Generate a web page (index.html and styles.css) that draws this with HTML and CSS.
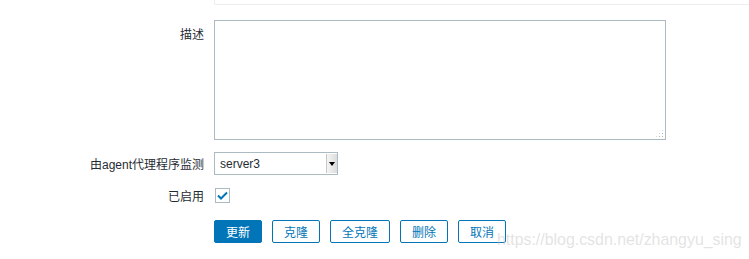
FILE: index.html
```html
<!DOCTYPE html>
<html lang="zh-CN">
<head>
    <meta charset="UTF-8">
    <title>主机</title>
    <link rel="stylesheet" href="styles.css">
</head>
<body>
    <div class="page">
        <div class="prev-field"></div>

        <form class="host-form">
            <div class="row">
                <label class="label label-top">描述</label>
                <span class="textarea-wrap">
                    <textarea class="textarea"></textarea>
                    <span class="grip"></span>
                </span>
            </div>

            <div class="row">
                <label class="label">由agent代理程序监测</label>
                <span class="select-wrap">
                    <select class="select">
                        <option>server3</option>
                    </select>
                    <span class="select-arrow"></span>
                </span>
            </div>

            <div class="row row-check">
                <label class="label">已启用</label>
                <span class="checkbox">
                    <svg width="11" height="9" viewBox="0 0 11 9">
                        <path d="M1 4.5 L4 7.5 L10 1.5" fill="none" stroke="#0275b8" stroke-width="2"/>
                    </svg>
                </span>
            </div>

            <div class="row row-buttons">
                <span class="label"></span>
                <div class="buttons">
                    <button type="button" class="btn btn-main">更新</button>
                    <button type="button" class="btn">克隆</button>
                    <button type="button" class="btn">全克隆</button>
                    <button type="button" class="btn">删除</button>
                    <button type="button" class="btn">取消</button>
                </div>
            </div>
        </form>

        <div class="watermark">https://blog.csdn.net/zhangyu_sing</div>
    </div>
</body>
</html>
```

FILE: styles.css
```css
body {
    margin: 0;
    background: #fff;
    font-family: "Liberation Sans", Arial, "Noto Sans CJK SC", sans-serif;
    font-size: 12px;
    color: #1f2c33;
}

.page {
    position: relative;
    height: 259px;
    overflow: hidden;
}

.prev-field {
    margin-left: 214px;
    height: 4px;
    border-left: 1px solid #ebeef0;
    border-bottom: 1px solid #ebeef0;
}

.host-form {
    padding-top: 15px;
}

.row {
    display: flex;
    align-items: center;
    margin-bottom: 12px;
}

.row:first-child {
    align-items: flex-start;
}

.label {
    width: 204px;
    flex: none;
    margin-right: 10px;
    text-align: right;
}

.label-top {
    padding-top: 5px;
}

.textarea-wrap {
    position: relative;
    display: inline-block;
    line-height: 0;
}

.textarea {
    box-sizing: border-box;
    width: 452px;
    height: 120px;
    margin: 0;
    border: 1px solid #acbbc2;
    background: #fff;
    resize: none;
}

/* dotted resize grip in the corner */
.grip {
    position: absolute;
    right: 2px;
    bottom: 2px;
    width: 9px;
    height: 9px;
    background:
        radial-gradient(circle, #b4b4b4 0.8px, transparent 1px) 0 0 / 3px 3px;
    clip-path: polygon(100% 0, 100% 100%, 0 100%);
}

.select-wrap {
    position: relative;
    display: inline-block;
}

.select {
    box-sizing: border-box;
    width: 124px;
    height: 23px;
    margin: 0;
    padding: 0 0 0 5px;
    border: 1px solid #acbbc2;
    border-radius: 0;
    background: #fff;
    font-family: inherit;
    font-size: 12px;
    color: #1f2c33;
    -webkit-appearance: none;
    appearance: none;
}

.select-arrow {
    position: absolute;
    top: 2px;
    right: 1px;
    width: 10px;
    height: 19px;
    background: linear-gradient(to right, #f4f4f4, #dcdcdc);
    border-left: 1px solid #c8c8c8;
}

.select-arrow::after {
    content: "";
    position: absolute;
    left: 2px;
    top: 8px;
    border-left: 3px solid transparent;
    border-right: 3px solid transparent;
    border-top: 4px solid #000;
}

.row-check {
    margin-top: 2px;
    margin-bottom: 16px;
}

.checkbox {
    box-sizing: border-box;
    width: 15px;
    height: 15px;
    border: 1px solid #acbbc2;
    display: flex;
    align-items: center;
    justify-content: center;
    margin-left: 1px;
}

.buttons {
    display: flex;
    gap: 10px;
}

.btn {
    box-sizing: border-box;
    height: 23px;
    margin: 0;
    padding: 0 11px;
    border: 1px solid #0275b8;
    border-radius: 2px;
    background: #fff;
    color: #0275b8;
    font-family: inherit;
    font-size: 12px;
    cursor: pointer;
}

.btn-main {
    background: #0275b8;
    color: #fff;
}

.watermark {
    position: absolute;
    left: 497px;
    top: 231px;
    font-size: 15.9px;
    color: rgba(200, 200, 200, 0.5);
    white-space: nowrap;
}
```
